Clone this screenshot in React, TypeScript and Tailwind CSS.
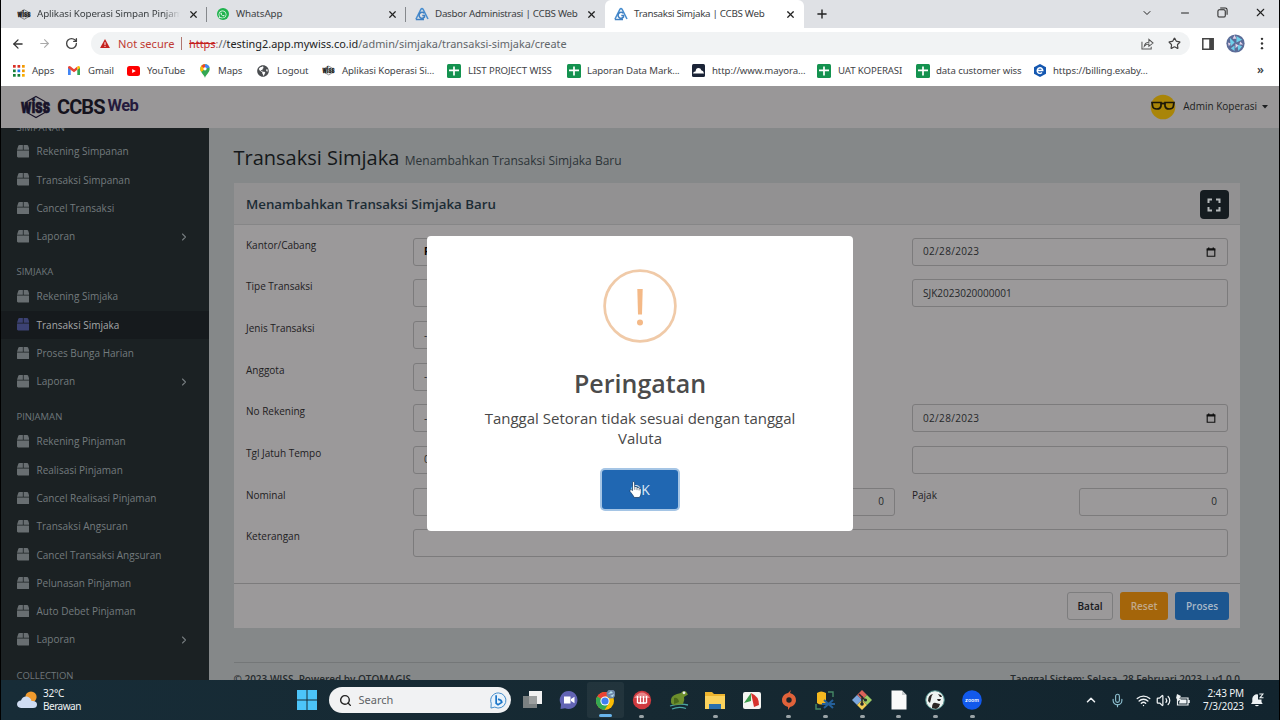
import type { ReactNode } from 'react'
import clsx from 'clsx'
import { ArrowLeft, ArrowRight, ChevronDown, ChevronRight, ChevronUp, Mic, Minus, Plus, RotateCw, Search, Star, Volume2, Wifi, X } from 'lucide-react'
import { FaBox, FaGlobeAmericas, FaWhatsapp } from 'react-icons/fa'

const CHROME_FONT = "font-['Noto_Sans','Open_Sans',sans-serif]"

/* ---------- logos ---------- */

function WissMark({ className }: { className?: string }) {
  return (
    <svg viewBox="0 0 31 24" className={className} aria-hidden="true">
      <path d="M16 1.5 25 6.5V17.5L16 22.5 7 17.5V6.5Z" fill="none" stroke="currentColor" strokeWidth="1.1" />
      <text x="1" y="17.8" textLength="29" lengthAdjust="spacingAndGlyphs" fontFamily="Roboto, sans-serif" fontWeight="900" fontSize="20" fill="currentColor" stroke="currentColor" strokeWidth="0.7">
        wiss
      </text>
    </svg>
  )
}

function CcbsIcon() {
  return (
    <svg viewBox="0 0 14 14" className="size-[14px]" aria-hidden="true">
      <path d="M1 12 6 2.2Q7 .8 8 2.2L13 12" fill="none" stroke="#4a8fd0" strokeWidth="1.6" />
      <path d="M9.3 6.2A3 3 0 1 0 9.5 10V8.6H7.3M.8 12.6H9" fill="none" stroke="#3f7fc1" strokeWidth="1.5" />
    </svg>
  )
}

function SheetIcon() {
  return (
    <svg viewBox="0 0 14 14" className="size-[14px]" aria-hidden="true">
      <rect width="14" height="14" rx="1.5" fill="#14924f" />
      <path d="M2 6.3H12M7 2.4V11.6" stroke="#fff" strokeWidth="1.7" />
    </svg>
  )
}

function AppsIcon() {
  const colors = ['#d93025', '#d93025', '#f29900', '#188038', '#1a73e8', '#f29900', '#188038', '#188038', '#f9ab00']
  return (
    <svg viewBox="0 0 12 12" className="size-[12px]" aria-hidden="true">
      {colors.map((c, i) => (
        <rect key={i} x={(i % 3) * 4.5} y={Math.floor(i / 3) * 4.5} width="2.7" height="2.7" fill={c} />
      ))}
    </svg>
  )
}

function GmailIcon() {
  return (
    <svg viewBox="0 0 12 9" className="h-[9px] w-[12px]" aria-hidden="true">
      <path d="M0 1.5V9H2.7V3.5Z" fill="#4285f4" />
      <path d="M12 1.5V9H9.3V3.5Z" fill="#34a853" />
      <path d="M0 1.2Q.8-.6 2.7.6L6 3.2 9.3.6V3.8L6 6.3 0 2Z" fill="#ea4335" />
      <path d="M9.3.6Q11.2-.6 12 1.2V2L9.3 4Z" fill="#fbbc04" />
    </svg>
  )
}

function YoutubeIcon() {
  return (
    <svg viewBox="0 0 13 10" className="h-[10px] w-[13px]" aria-hidden="true">
      <rect width="13" height="10" rx="2.5" fill="#f00" />
      <path d="M5.2 2.9V7.1L8.8 5Z" fill="#fff" />
    </svg>
  )
}

function MapsIcon() {
  return (
    <svg viewBox="0 0 10 14" className="h-[14px] w-[10px]" aria-hidden="true">
      <path d="M5 14C4.4 10.5.3 8.6.3 4.9A4.7 4.7 0 0 1 9.7 4.9C9.7 8.6 5.6 10.5 5 14Z" fill="#34a853" />
      <path d="M.3 4.9A4.7 4.7 0 0 1 5 .2L5 5 1.3 8Q.3 6.4.3 4.9Z" fill="#fbbc04" />
      <path d="M1.3 1.9A4.7 4.7 0 0 1 5 .2L5 5Z" fill="#ea4335" />
      <path d="M5 .2A4.7 4.7 0 0 1 9.5 3.6L5 5Z" fill="#4285f4" />
      <circle cx="5" cy="4.8" r="1.6" fill="#fff" />
    </svg>
  )
}

function CloudIcon() {
  return (
    <svg viewBox="0 0 13 13" className="size-[13px]" aria-hidden="true">
      <rect width="13" height="13" rx="1.5" fill="#1b2437" />
      <path d="M1 9.5Q1.500 7.2 3.5 7.4 4 4 6.4 4 8.8 4 9.3 6.3 11.6 6.5 12 9.5Z" fill="#fff" />
    </svg>
  )
}

function ExabytesIcon() {
  return (
    <svg viewBox="0 0 12 13" className="h-[13px] w-[12px]" aria-hidden="true">
      <path d="M6 0 12 3.2V9.8L6 13 0 9.8V3.2Z" fill="#1457b0" />
      <path d="M3.3 6.5H8.8A2.8 2.8 0 1 0 8 8.6" fill="none" stroke="#fff" strokeWidth="1.4" />
    </svg>
  )
}

/* ---------- browser ---------- */

const tabs = [
  { title: 'Aplikasi Koperasi Simpan Pinjam', icon: <WissMark className="h-[11px] w-[14px] text-[#222]" />, track: 'tracking-[-0.12px]' },
  { title: 'WhatsApp', icon: <span className="flex size-[12px] items-center justify-center rounded-full bg-[#1fb34d] text-white"><FaWhatsapp size={9} /></span>, track: 'tracking-[-0.1px]' },
  { title: 'Dasbor Administrasi | CCBS Web', icon: <CcbsIcon />, track: 'tracking-[-0.27px]' },
  { title: 'Transaksi Simjaka | CCBS Web', icon: <CcbsIcon />, track: 'tracking-[-0.3px]' },
]

function TabStrip() {
  return (
    <div className="flex h-[28px] items-stretch bg-[#dfe1e5] pl-[7px] text-[9.8px] text-[#3c4043]">
      {tabs.map((tab, i) => (
        <div
          key={tab.title}
          className={clsx(
            'flex w-[199px] items-center pl-[8px]',
            i === 3 && 'rounded-t-[6px] bg-white',
          )}
        >
          <span className="flex w-[15px] shrink-0 justify-center">{tab.icon}</span>
          <span className={clsx('ml-[6px] w-[143px] shrink-0 whitespace-nowrap', tab.track, i === 0 && 'overflow-hidden [mask-image:linear-gradient(to_right,#000_88%,transparent)]')}>
            {tab.title}
          </span>
          <X size={11} strokeWidth={2.6} className="ml-[8px] shrink-0 text-[#222]" />
          <span className={clsx('ml-auto h-[15px] w-px shrink-0', i < 2 ? 'bg-[#85888c]' : 'bg-transparent')} />
        </div>
      ))}
      <div className="flex flex-1 items-center pl-[11px] text-[#222]">
        <Plus size={14} strokeWidth={2.4} />
        <div className="ml-auto flex items-center gap-[26px] pr-[12px] pb-[3px]">
          <ChevronDown size={12} strokeWidth={2} />
          <Minus size={12} strokeWidth={2} />
          <svg viewBox="0 0 12 12" className="size-[11px]" fill="none" stroke="currentColor" strokeWidth="1.1" aria-hidden="true">
            <rect x="1" y="3" width="8" height="8" rx="1.5" />
            <path d="M3.5 1H9Q11 1 11 3V8.5" />
          </svg>
          <X size={13} strokeWidth={2} />
        </div>
      </div>
    </div>
  )
}

function AddressBar() {
  return (
    <div className="flex h-[31px] items-center bg-white pl-[10px] text-[#333]">
      <ArrowLeft size={14} strokeWidth={2.2} />
      <ArrowRight size={13} strokeWidth={2} className="ml-[13px] text-[#aaa]" />
      <RotateCw size={13} strokeWidth={2.5} className="ml-[14px] text-[#444]" />
      <div className="ml-[13px] flex h-[23px] w-[1099px] items-center rounded-full bg-[#f1f3f4] pr-[9px] pl-[9px] text-[11.1px]">
        <svg viewBox="0 0 11 10" className="h-[9px] w-[10px]" aria-hidden="true">
          <path d="M5.5 0 11 10H0Z" fill="#c5221f" />
          <path d="M5.5 3.6V6.6M5.5 7.6V8.8" stroke="#fff" strokeWidth="1.1" />
        </svg>
        <span className="ml-[8px] w-[56px] pt-px whitespace-nowrap text-[#c03a33]">Not secure</span>
        <span className="mx-[7px] h-[13px] w-px bg-[#b0766f]" />
        <span className="pt-px text-[10.9px] whitespace-nowrap text-[#62666a]">
          <span className="text-[#c5221f] line-through">https</span>
          <span className="text-[#a66]">:</span>//<span className="text-[#222]">testing2.app.mywiss.co.id</span>/admin/simjaka/transaksi-simjaka/create
        </span>
        <svg viewBox="0 0 14 13" className="ml-auto h-[12px] w-[13px]" fill="none" stroke="#555" strokeWidth="1.1" aria-hidden="true">
          <path d="M1 4V12H11V9.5M3.5 9Q4 4.8 8.5 4.5V1.5L13 5.5 8.5 9V6.5Q5.5 6.4 3.5 9Z" />
        </svg>
        <Star size={13} strokeWidth={2.2} className="ml-[14px] text-[#444]" />
      </div>
      <svg viewBox="0 0 12 12" className="ml-[12px] size-[12px]" aria-hidden="true">
        <path d="M.8.8H11.2V11.2H.8Z" fill="none" stroke="#444" strokeWidth="1.5" />
        <path d="M7.2 1H11V11H7.2Z" fill="#444" />
      </svg>
      <svg viewBox="0 0 20 20" className="ml-[12px] size-[19px]" aria-hidden="true">
        <circle cx="10" cy="10" r="9.6" fill="#5c6c98" />
        <path d="M4 4 9 9 5 13ZM11 2 17 6 11 9ZM12 11 17 13 13 18ZM5 15 9 12 9 18Z" fill="#6fd0ea" />
        <path d="M9 1 11 5 7 5ZM15 8 18 11 14 11ZM2 9 5 10 3 13ZM10 10 13 12 10 15Z" fill="#e3d3ea" />
      </svg>
      <svg viewBox="0 0 4 14" className="ml-[15px] h-[13px] w-[4px]" fill="#333" aria-hidden="true">
        <circle cx="2" cy="2" r="1.3" />
        <circle cx="2" cy="7" r="1.3" />
        <circle cx="2" cy="12" r="1.3" />
      </svg>
    </div>
  )
}

const bookmarks: { label: string; icon: ReactNode; width: string; gap: string }[] = [
  { label: 'Apps', icon: <AppsIcon />, width: 'w-[55px]', gap: 'w-[19px]' },
  { label: 'Gmail', icon: <GmailIcon />, width: 'w-[59px]', gap: 'w-[20px]' },
  { label: 'YouTube', icon: <YoutubeIcon />, width: 'w-[73px]', gap: 'w-[20px]' },
  { label: 'Maps', icon: <MapsIcon />, width: 'w-[57px]', gap: 'w-[18px]' },
  { label: 'Logout', icon: <FaGlobeAmericas size={12} className="text-[#4a4d50]" />, width: 'w-[65px]', gap: 'w-[20px]' },
  { label: 'Aplikasi Koperasi Si...', icon: <WissMark className="h-[11px] w-[13px] text-[#222]" />, width: 'w-[125px]', gap: 'w-[20px]' },
  { label: 'LIST PROJECT WISS', icon: <SheetIcon />, width: 'w-[120px]', gap: 'w-[21px]' },
  { label: 'Laporan Data Mark...', icon: <SheetIcon />, width: 'w-[125px]', gap: 'w-[20px]' },
  { label: 'http://www.mayora...', icon: <CloudIcon />, width: 'w-[125px]', gap: 'w-[20px]' },
  { label: 'UAT KOPERASI', icon: <SheetIcon />, width: 'w-[99px]', gap: 'w-[21px]' },
  { label: 'data customer wiss', icon: <SheetIcon />, width: 'w-[118px]', gap: 'w-[20px]' },
  { label: 'https://billing.exaby...', icon: <ExabytesIcon />, width: 'w-[130px]', gap: 'w-[19px]' },
]

function BookmarksBar() {
  return (
    <div className="flex h-[27px] items-center bg-white pb-[3px] pl-[12px] text-[9.65px] text-[#3f4347]">
      {bookmarks.map((b) => (
        <div key={b.label} className={clsx('flex shrink-0 items-center whitespace-nowrap', b.width)}>
          <span className={clsx('shrink-0', b.gap)}>{b.icon}</span>
          <span className="tracking-[-0.1px]">{b.label}</span>
        </div>
      ))}
      <span className="ml-auto pr-[15px] pb-[2px] text-[12px] font-semibold">»</span>
    </div>
  )
}

/* ---------- application ---------- */

function AppHeader() {
  return (
    <header className="flex h-[42px] items-center bg-[#999798] pr-[11px] pb-px pl-[19px]">
      <WissMark className="h-[24px] w-[31px] text-[#181329]" />
      <span className="ml-[6px] w-[47px] font-['Roboto',sans-serif] text-[20px] font-bold tracking-[-0.9px] text-[#15131d]">CCBS</span>
      <span className="ml-[3.5px] font-['Roboto',sans-serif] text-[16.5px] font-bold tracking-[-0.5px] text-[#251a3d]">Web</span>
      <div className="ml-auto flex items-center text-[10px] text-[#1d1f21]">
        <svg viewBox="0 0 26 26" className="size-[26px]" aria-hidden="true">
          <circle cx="13" cy="13" r="12.3" fill="#a98508" />
          <path d="M2 8.5H11V12Q10.5 15 7 15 3 15 2.6 12ZM15 8.5H24L23.4 12Q23 15 19 15 15.5 15 15 12ZM11 10Q13 8.8 15 10" fill="none" stroke="#1b1708" strokeWidth="1.7" />
        </svg>
        <span className="ml-[7.5px] whitespace-nowrap">Admin Koperasi</span>
        <svg viewBox="0 0 6 4" className="ml-[5px] h-[4px] w-[6px]" aria-hidden="true">
          <path d="M0 0H6L3 3.6Z" fill="#1d1f21" />
        </svg>
      </div>
    </header>
  )
}

const menu = [
  { title: 'SIMPANAN', items: ['Rekening Simpanan', 'Transaksi Simpanan', 'Cancel Transaksi', 'Laporan'] },
  { title: 'SIMJAKA', items: ['Rekening Simjaka', 'Transaksi Simjaka', 'Proses Bunga Harian', 'Laporan'] },
  {
    title: 'PINJAMAN',
    items: ['Rekening Pinjaman', 'Realisasi Pinjaman', 'Cancel Realisasi Pinjaman', 'Transaksi Angsuran', 'Cancel Transaksi Angsuran', 'Pelunasan Pinjaman', 'Auto Debet Pinjaman', 'Laporan'],
  },
  { title: 'COLLECTION', items: [] },
]

function Sidebar() {
  return (
    <aside className="w-[208px] shrink-0 overflow-hidden bg-[#1b2123]">
      <nav className="-mt-[22px]">
        {menu.map((section) => (
          <div key={section.title}>
            <h3 className="h-[31.8px] pt-[14.5px] pl-[15.5px] text-[9.5px] leading-[14px] text-[#6f777b]">{section.title}</h3>
            {section.items.map((item) => {
              const active = item === 'Transaksi Simjaka'
              return (
                <a
                  key={item}
                  className={clsx('flex h-[28.3px] items-center pr-[19px] pl-[15.5px] text-[10px]', active ? 'bg-[#161a1d] text-[#a5a7a8]' : 'text-[#747b7e]')}
                >
                  <FaBox size={12.5} className={clsx('mb-px', active ? 'text-[#3c4273]' : 'text-[#686e71]')} />
                  <span className="ml-[7.5px] whitespace-nowrap">{item}</span>
                  {item === 'Laporan' && <ChevronRight size={12} strokeWidth={2.2} className="ml-auto" />}
                </a>
              )
            })}
          </div>
        ))}
      </nav>
    </aside>
  )
}

interface FieldProps {
  value?: string
  date?: boolean
  right?: boolean
  strong?: boolean
  className?: string
}

function Field({ value, date, right, strong, className }: FieldProps) {
  return (
    <div
      className={clsx(
        'flex h-[28px] items-center rounded-[3px] border border-[#7c7b7c] px-[10px] text-[#26282a]',
        date && 'tracking-[0.33px]',
        right && 'justify-end',
        strong && 'font-bold text-black',
        className,
      )}
    >
      {value}
      {date && (
        <svg viewBox="0 0 10 10" className="mr-[1px] ml-auto size-[10px]" aria-hidden="true">
          <path d="M1.2 2H8.8V9.2H1.2Z" fill="none" stroke="#111" strokeWidth="1.1" />
          <path d="M.8 1.6H9.2V3.4H.8ZM2 .4H3.4V2H2ZM6.6.4H8V2H6.6Z" fill="#111" />
        </svg>
      )}
    </div>
  )
}

const rows: { label: string; left?: FieldProps; right?: FieldProps }[] = [
  { label: 'Kantor/Cabang', left: { value: 'P', strong: true }, right: { value: '02/28/2023', date: true } },
  { label: 'Tipe Transaksi', left: {}, right: { value: 'SJK2023020000001' } },
  { label: 'Jenis Transaksi', left: { value: '-' } },
  { label: 'Anggota', left: { value: '-' } },
  { label: 'No Rekening', left: { value: '-' }, right: { value: '02/28/2023', date: true } },
  { label: 'Tgl Jatuh Tempo', left: { value: '0' }, right: {} },
]

function TransactionForm() {
  return (
    <section className="mt-[11px] flex h-[445px] w-[1006.5px] flex-col bg-[#9b999a] text-[10px] text-[#1e2022]">
      <div className="flex h-[42px] shrink-0 items-center border-b border-[#868687] bg-[#929192] pt-[2px] pr-[11.5px] pl-[12.5px]">
        <h2 className="text-[13.3px] font-semibold text-[#1c2c35]">Menambahkan Transaksi Simjaka Baru</h2>
        <button type="button" className="ml-auto flex size-[29px] items-center justify-center rounded-[4px] bg-[#151c20]">
          <svg viewBox="0 0 14 14" className="size-[14px]" aria-hidden="true">
            <path d="M1.5 5V1.5H5M9 1.5H12.5V5M12.5 9V12.5H9M5 12.5H1.5V9" fill="none" stroke="#b4b8b9" strokeWidth="2" />
          </svg>
        </button>
      </div>
      <div className="flex flex-1 flex-col gap-[13.67px] px-[12.5px] pt-[12.7px]">
        {rows.map((row) => (
          <div key={row.label} className="grid h-[28px] grid-cols-[167px_316px_183px_316px]">
            <label className="leading-[15.4px]">{row.label}</label>
            {row.left && <Field {...row.left} />}
            {row.right && <Field {...row.right} className="col-start-4" />}
          </div>
        ))}
        <div className="grid h-[28px] grid-cols-[167px_316px_17px_149px_17px_167px_149px]">
          <label className="leading-[15.4px]">Nominal</label>
          <Field />
          <Field value="0" right className="col-start-4" />
          <label className="col-start-6 leading-[15.4px]">Pajak</label>
          <Field value="0" right />
        </div>
        <div className="grid h-[28px] grid-cols-[167px_815px]">
          <label className="leading-[15.4px]">Keterangan</label>
          <Field />
        </div>
      </div>
      <div className="flex h-[45px] items-center justify-end gap-[7px] border-t border-[#7c7b7c] pr-[11px] font-semibold">
        <button type="button" className="h-[28px] w-[46px] rounded-[3px] border border-[#7d7d7e] text-[#15171a]">Batal</button>
        <button type="button" className="h-[28px] w-[48px] rounded-[3px] bg-[#a4650a] text-[#c1a98b]">Reset</button>
        <button type="button" className="h-[28px] w-[54px] rounded-[3px] bg-[#1c5690] text-[#a9b8c7]">Proses</button>
      </div>
    </section>
  )
}

function WarningDialog() {
  return (
    <div role="dialog" aria-modal="true" className="absolute top-[236px] left-[426px] flex h-[294.5px] w-[426px] flex-col items-center rounded-[4px] bg-white text-[#545454]">
      <svg viewBox="0 0 74 74" className="mt-[33px] size-[74px] shrink-0" aria-hidden="true">
        <circle cx="37" cy="37" r="35.4" fill="none" stroke="#f0caa8" strokeWidth="2.7" />
        <path d="M34.3 20H39.7L39 45.5H35Z" fill="#f4b987" />
        <circle cx="37" cy="53.5" r="3" fill="#f4b987" />
      </svg>
      <h2 className="mt-[23px] text-[25px] leading-[34px] font-semibold text-[#4b4b4b]">Peringatan</h2>
      <p className="mt-[7.6px] w-[340px] text-center text-[15px] leading-[20.7px] text-[#484848]">Tanggal Setoran tidak sesuai dengan tanggal Valuta</p>
      <button type="button" className="relative mt-[21.4px] h-[39px] w-[76px] rounded-[3px] bg-[#2067b2] text-[14px] text-[#dbe8f5] ring-2 ring-[#a5c5e5]">
        OK
        <svg viewBox="0 0 12 16" className="absolute top-[11px] left-[27px] h-[17px] w-[13px]" aria-hidden="true">
          <path d="M3.2 9V1.7Q3.3.5 4.2.5 5.2.5 5.2 1.7V5.2Q7.2 4.7 7.4 6 9.2 5.5 9.5 6.8 11.4 6.5 11.4 8.3V11Q11.3 13.5 9.7 15.5H4.8Q3.7 13.3.8 9.8.4 8.3 1.5 8.1 2.3 8.1 3.2 9Z" fill="#fff" stroke="#12365f" strokeWidth=".7" />
          <path d="M5.3 5V8.3M7.4 6V8.6M9.4 7V8.9" stroke="#345" strokeWidth=".6" />
        </svg>
      </button>
    </div>
  )
}

/* ---------- taskbar ---------- */

function TaskIcon({ children }: { children: ReactNode }) {
  return (
    <svg viewBox="0 0 20 20" className="size-[20px]" aria-hidden="true">
      {children}
    </svg>
  )
}

const taskIcons: { name: string; running?: boolean; art: ReactNode }[] = [
  {
    name: 'Task view',
    art: (
      <>
        <path d="M7 1H20V14H7Z" fill="#f1f1f1" />
        <path d="M1 6H15V18H1Z" fill="#8d9090" fillOpacity=".85" />
      </>
    ),
  },
  {
    name: 'Chat',
    art: (
      <>
        <path d="M10 1A9 9 0 1 1 6 18.3L1.5 19 2 14.5A9 9 0 0 1 10 1Z" fill="#6264b4" />
        <path d="M5 6.5H11.5V13.5H5ZM12 9 15.5 6.8V13.2L12 11Z" fill="#fff" />
      </>
    ),
  },
  {
    name: 'Chrome',
    art: (
      <>
        <circle cx="10" cy="11" r="9" fill="#fbbc04" />
        <path d="M10 11 2.2 6.5A9 9 0 0 1 17.8 6.5H10Z" fill="#ea4335" />
        <path d="M10 11 2.2 6.5A9 9 0 0 0 9.5 20L13.9 13.2Z" fill="#34a853" />
        <circle cx="10" cy="11" r="4.6" fill="#fff" />
        <circle cx="10" cy="11" r="3.6" fill="#3f7ef0" />
        <circle cx="16" cy="4" r="4.5" fill="#6d86a8" />
        <path d="M13 4 16 1 18 3ZM15 6 19 4 18 7Z" fill="#b5e0ee" />
      </>
    ),
  },
  {
    name: 'Red disc',
    running: true,
    art: (
      <>
        <circle cx="10" cy="10" r="9.2" fill="#cf3a3f" />
        <path d="M2 8Q10-3 18 8Z" fill="#e7878a" />
        <path d="M5.5 6V13M8.5 6V14M11.5 6V14M14.5 6V13M5.5 13H14.5" stroke="#fff" strokeWidth="1.4" />
      </>
    ),
  },
  {
    name: 'Frog',
    art: (
      <>
        <path d="M1 16Q10 13 19 15M3 19Q10 16 17 18.5" stroke="#4ba6a4" strokeWidth="1.3" fill="none" />
        <path d="M2 12Q1 6 8 4L12 3Q14 0 17 1.5L19 4.5 15 7Q16 10 14 14L6 15Q2 15 2 12Z" fill="#6c8e2c" />
        <path d="M5 8Q9 7 10 12L5 14Z" fill="#4a681c" />
        <circle cx="15" cy="2.8" r="1.4" fill="#eee" />
      </>
    ),
  },
  {
    name: 'File Explorer',
    running: true,
    art: (
      <>
        <path d="M0 2H7L9 4H20V19H0Z" fill="#eeb52f" />
        <path d="M0 6H20V19H0Z" fill="#fbd25c" />
        <path d="M4 14H16V19H4Z" fill="#2a6fae" />
      </>
    ),
  },
  {
    name: 'Umbrella',
    art: (
      <>
        <rect x="1" y="2" width="18" height="17" rx="2" fill="#f5f5f2" />
        <path d="M9 3 2 13 9 11Z" fill="#3a9b49" />
        <path d="M9 3Q17 6 17 15L12 17Z" fill="#d6322d" />
      </>
    ),
  },
  {
    name: 'Origin',
    running: true,
    art: (
      <>
        <path d="M12 0 11 3Q17.5 5 17 11 16 16 11 17L9 20 9 17Q2.5 15 3 9 4 4 9 3Z" fill="#e0623a" />
        <circle cx="10" cy="10" r="2.7" fill="#1b2429" />
      </>
    ),
  },
  {
    name: 'Database',
    running: true,
    art: (
      <>
        <path d="M2 3Q6 0 11 3V13Q6 16 2 13Z" fill="#f5b91f" />
        <path d="M13 2H18V7M1 14V19H6" stroke="#458966" strokeWidth="1.4" fill="none" />
        <path d="M9 10 18 18M18 10 9 18M7 14H20" stroke="#245f99" strokeWidth="2" />
      </>
    ),
  },
  {
    name: 'Git',
    running: true,
    art: (
      <>
        <path d="M10 0 15 5 10 10 5 5Z" fill="#db6259" />
        <path d="M5 5 10 10 5 15 0 10Z" fill="#7da7dd" />
        <path d="M15 5 20 10 15 15 10 10Z" fill="#9dca65" />
        <path d="M10 10 15 15 10 20 5 15Z" fill="#f4cd55" />
        <path d="M7 4 13 10M10 6V15" stroke="#25282b" strokeWidth="1.5" />
        <circle cx="10" cy="14" r="1.8" fill="#25282b" />
        <circle cx="13.5" cy="10" r="1.6" fill="#25282b" />
      </>
    ),
  },
  {
    name: 'Document',
    running: true,
    art: (
      <>
        <path d="M2.5 0.5H13L17.5 5V19.5H2.5Z" fill="#fafafa" />
        <path d="M13 .5V5H17.5Z" fill="#c8ccce" />
      </>
    ),
  },
  {
    name: 'DBeaver',
    running: true,
    art: (
      <>
        <circle cx="10" cy="10" r="9.3" fill="#eef4f2" stroke="#4c8d88" strokeWidth="1" />
        <path d="M3 11Q3 5 8 4 6 6 6 9L5 13ZM13 4 16 5 17 7 15 7ZM12 9 16 9 15 11 13 11ZM7 18Q7 12 11 13L15 14 14 17 11 19Z" fill="#2b2725" />
      </>
    ),
  },
  {
    name: 'Zoom',
    running: true,
    art: (
      <>
        <circle cx="10" cy="10" r="9.8" fill="#1259ec" />
        <text x="10" y="12" textAnchor="middle" fontFamily="Inter, sans-serif" fontWeight="600" fontSize="5.2" fill="#fff">
          zoom
        </text>
      </>
    ),
  },
]

function Taskbar() {
  return (
    <footer className={clsx('flex h-[40px] items-center bg-linear-to-r from-[#172c37] via-[#162932] to-[#12242e] pl-[16px] text-[10px] text-[#eef2f4]', CHROME_FONT)}>
      <svg viewBox="0 0 20 18" className="h-[18px] w-[20px]" aria-hidden="true">
        <circle cx="14" cy="6" r="5.6" fill="#f09a2d" />
        <path d="M4 17Q0 16.5 0 13 .5 9.5 4 9.5 5.5 5 10 5.5 14 6.5 14.5 10 20 9.5 20 13.5 20 17 16 17Z" fill="#cfdcf2" />
      </svg>
      <div className="ml-[6px] w-[60px] leading-[13px]">
        <p className="tracking-[-0.2px]">32°C</p>
        <p className="tracking-[-0.5px]">Berawan</p>
      </div>
      <svg viewBox="0 0 20 20" className="ml-[194px] size-[20px]" fill="#4cc4f8" aria-hidden="true">
        <path d="M0 0H9.5V9.5H0ZM10.5 0H20V9.5H10.5ZM0 10.5H9.5V20H0ZM10.5 10.5H20V20H10.5Z" />
      </svg>
      <div className="ml-[11.5px] flex h-[26px] w-[182px] items-center rounded-full bg-[#f1f2f3] pr-[4px] pl-[10px]">
        <Search size={13} strokeWidth={2.6} className="text-[#222]" />
        <span className="ml-[7px] text-[11px] text-[#5f6366]">Search</span>
        <svg viewBox="0 0 18 18" className="ml-auto size-[17px]" aria-hidden="true">
          <path d="M9 1A8 8 0 1 1 5 16L1 17 1.3 12A8 8 0 0 1 9 1Z" fill="#e9f3fb" stroke="#3b87c8" />
          <path d="M6.5 3.5V12L8.5 13.5 12.5 11Q12.5 8.5 8.5 7.5" fill="none" stroke="#1b76c9" strokeWidth="1.8" />
        </svg>
      </div>
      <div className="ml-[3px] flex">
        {taskIcons.map((t) => (
          <div key={t.name} title={t.name} className={clsx('flex h-[36px] w-[36.7px] flex-col items-center rounded-[3px] pt-[8px]', t.name === 'Chrome' && 'bg-white/5')}>
            <TaskIcon>{t.art}</TaskIcon>
            {t.name === 'Chrome' && <span className="mt-[4px] h-[3px] w-[13px] rounded-full bg-[#69b5eb]" />}
            {t.running && <span className="mt-[5px] h-[2.5px] w-[5px] rounded-full bg-[#9aa3a7]" />}
          </div>
        ))}
      </div>
      <div className="ml-auto flex items-center pr-[15px]">
        <ChevronUp size={14} strokeWidth={2.6} />
        <Mic size={15} strokeWidth={1.8} className="ml-[12px] text-[#8fc2d2]" />
        <Wifi size={15} strokeWidth={2.2} className="ml-[11px]" />
        <Volume2 size={15} strokeWidth={2} className="ml-[5px]" />
        <svg viewBox="0 0 14 12" className="ml-[5px] h-[12px] w-[14px]" aria-hidden="true">
          <path d="M1.500 4H12V11H1.500ZM13.2 6V9" fill="none" stroke="#eef2f4" strokeWidth="1.2" />
          <path d="M4 5.500H10.500V9.500H3ZM1 0 5 2 3 5 5 5 1 8 2 4.500 0 4.500Z" fill="#eef2f4" />
        </svg>
        <div className="w-[54px] text-right leading-[13.5px] whitespace-nowrap">
          <p className="tracking-[-0.15px]">2:43 PM</p>
          <p className="tracking-[-0.1px]">7/3/2023</p>
        </div>
        <svg viewBox="0 0 13 14" className="ml-[7px] h-[14px] w-[13px]" aria-hidden="true">
          <path d="M0 11 1.3 9V5.5A4.5 4.5 0 0 1 7 1.5V6.5H10.5V9L11.7 11ZM3.8 12H8Q6 14.5 3.8 12Z" fill="#eef2f4" />
          <path d="M8.3 1H12L9 4.8H12.5" fill="none" stroke="#eef2f4" strokeWidth="1.1" />
        </svg>
      </div>
    </footer>
  )
}

export default function App() {
  return (
    <div className="relative flex h-[720px] w-[1280px] flex-col overflow-hidden border-x border-black font-['Open_Sans','Noto_Sans',sans-serif]">
      <div className={CHROME_FONT}>
        <TabStrip />
        <AddressBar />
        <BookmarksBar />
      </div>
      <AppHeader />
      <div className="flex h-[552px] overflow-hidden">
        <Sidebar />
        <main className="flex-1 bg-[#858889] pl-[24.5px]">
          <div className="flex h-[44px] items-baseline pt-[16px] text-[#15181a]">
            <h1 className="text-[20px] leading-[28px] whitespace-nowrap">Transaksi Simjaka</h1>
            <span className="ml-[5.5px] text-[12px] whitespace-nowrap text-[#2c3438]">Menambahkan Transaksi Simjaka Baru</span>
          </div>
          <TransactionForm />
          <div className="mt-[34px] flex w-[1006.5px] justify-between border-t border-[#747778] pt-[8px] text-[10px] leading-[16px] font-semibold text-[#262b2d]">
            <span>© 2023 WISS. Powered by OTOMAGIS</span>
            <span className="tracking-[-0.06px]">Tanggal Sistem: Selasa, 28 Februari 2023 | v1.0.0</span>
          </div>
        </main>
      </div>
      <Taskbar />
      <WarningDialog />
    </div>
  )
}
